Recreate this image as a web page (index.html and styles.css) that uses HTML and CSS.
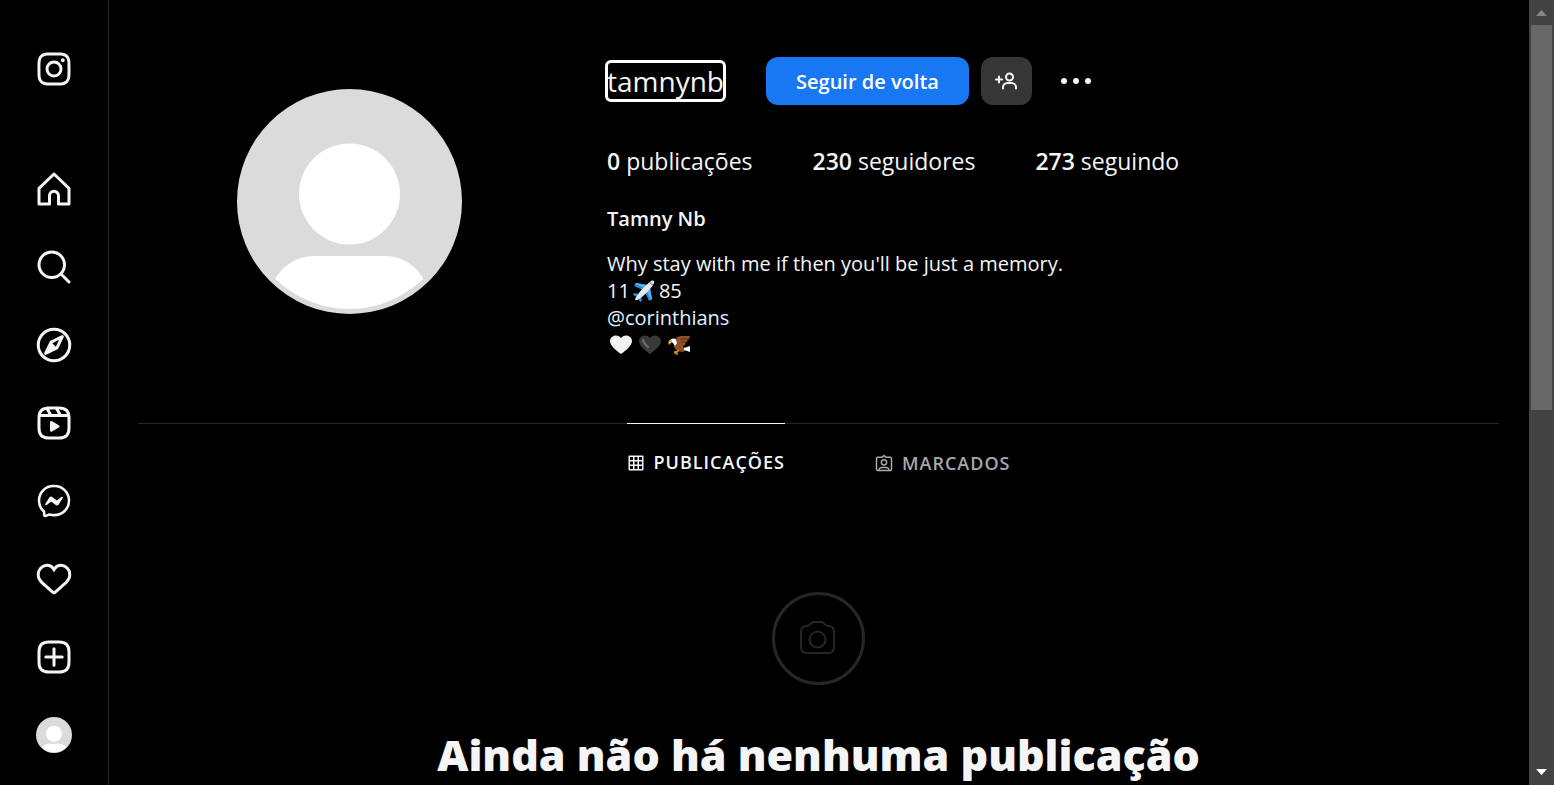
FILE: index.html
```html
<!DOCTYPE html>
<html lang="pt-BR">
<head>
<meta charset="utf-8">
<meta name="viewport" content="width=device-width, initial-scale=1">
<title>Tamny Nb (@tamnynb)</title>
<link rel="stylesheet" href="styles.css">
</head>
<body>
<svg class="defs" aria-hidden="true">
  <symbol id="avatar" viewBox="0 0 225 225">
    <circle cx="112.500" cy="112.500" r="112.500" fill="#dbdbdb"/>
    <circle cx="112.500" cy="105" r="50.500" fill="#fff"/>
    <path d="M38 190C47 175 61 167 78 167h69c17 0 31 8 39.500 23-20 18-45 30-74 30s-54.500-12-74.500-30Z" fill="#fff"/>
  </symbol>
</svg>
<div class="app">
  <nav class="sidebar" aria-label="Principal">
    <a class="nav-link logo" href="#" aria-label="Instagram">
      <svg class="icon" viewBox="0 0 24 24"><path fill="currentColor" d="M12 2.982c2.937 0 3.285.011 4.445.064a6.087 6.087 0 0 1 2.042.379 3.408 3.408 0 0 1 1.265.823 3.408 3.408 0 0 1 .823 1.265 6.087 6.087 0 0 1 .379 2.042c.053 1.160.064 1.508.064 4.445s-.011 3.285-.064 4.445a6.087 6.087 0 0 1-.379 2.042 3.643 3.643 0 0 1-2.088 2.088 6.087 6.087 0 0 1-2.042.379c-1.160.053-1.508.064-4.445.064s-3.285-.011-4.445-.064a6.087 6.087 0 0 1-2.043-.379 3.408 3.408 0 0 1-1.264-.823 3.408 3.408 0 0 1-.823-1.265 6.087 6.087 0 0 1-.379-2.042c-.053-1.160-.064-1.508-.064-4.445s.011-3.285.064-4.445a6.087 6.087 0 0 1 .379-2.042 3.408 3.408 0 0 1 .823-1.265 3.408 3.408 0 0 1 1.265-.823 6.087 6.087 0 0 1 2.042-.379c1.160-.053 1.508-.064 4.445-.064M12 1c-2.987 0-3.362.013-4.535.066a8.074 8.074 0 0 0-2.670.511 5.392 5.392 0 0 0-1.949 1.270 5.392 5.392 0 0 0-1.269 1.948 8.074 8.074 0 0 0-.510 2.670C1.012 8.638 1 9.013 1 12s.013 3.362.066 4.535a8.074 8.074 0 0 0 .511 2.670 5.392 5.392 0 0 0 1.270 1.949 5.392 5.392 0 0 0 1.948 1.269 8.074 8.074 0 0 0 2.670.510C8.638 22.988 9.013 23 12 23s3.362-.013 4.535-.066a8.074 8.074 0 0 0 2.670-.511 5.625 5.625 0 0 0 3.218-3.218 8.074 8.074 0 0 0 .510-2.670C22.988 15.362 23 14.987 23 12s-.013-3.362-.066-4.535a8.074 8.074 0 0 0-.511-2.670 5.392 5.392 0 0 0-1.270-1.949 5.392 5.392 0 0 0-1.948-1.269 8.074 8.074 0 0 0-2.670-.510C15.362 1.012 14.987 1 12 1Zm0 5.351A5.649 5.649 0 1 0 17.649 12 5.649 5.649 0 0 0 12 6.351Zm0 9.316A3.667 3.667 0 1 1 15.667 12 3.667 3.667 0 0 1 12 15.667Zm5.872-10.859a1.320 1.320 0 1 0 1.320 1.320 1.320 1.320 0 0 0-1.320-1.320Z"/></svg>
    </a>
    <a class="nav-link" href="#" aria-label="Página inicial">
      <svg class="icon line" viewBox="0 0 24 24"><path d="M9.005 16.545a2.997 2.997 0 0 1 2.997-2.997A2.997 2.997 0 0 1 15 16.545V22h7V11.543L12 2 2 11.543V22h7.005Z"/></svg>
    </a>
    <a class="nav-link" href="#" aria-label="Pesquisa">
      <svg class="icon line" viewBox="0 0 24 24"><path d="M19 10.500A8.500 8.500 0 1 1 10.500 2a8.500 8.500 0 0 1 8.500 8.500ZM16.511 16.511 22 22"/></svg>
    </a>
    <a class="nav-link" href="#" aria-label="Explorar">
      <svg class="icon line" viewBox="0 0 24 24"><path d="m13.941 13.953 3.640-7.530-7.530 3.640-3.640 7.530Z"/><path fill="currentColor" stroke="none" d="M10.060 10.056 13.949 13.945 6.423 17.580Z"/><circle cx="12" cy="12" r="10.500"/></svg>
    </a>
    <a class="nav-link" href="#" aria-label="Reels">
      <svg class="icon line" viewBox="0 0 24 24"><path d="M2.050 7.002H21.950M13.504 2.001l2.858 5.001M7.207 2.110l2.795 4.892M2 12.001v3.449c0 2.849.698 4.006 1.606 4.945.940.908 2.098 1.607 4.946 1.607h6.896c2.848 0 4.006-.699 4.946-1.607.908-.939 1.606-2.096 1.606-4.945V8.552c0-2.848-.698-4.006-1.606-4.945C19.454 2.699 18.296 2 15.448 2H8.552c-2.848 0-4.006.699-4.946 1.607C2.698 4.546 2 5.704 2 8.552Z"/><path fill="currentColor" stroke="none" d="M9.763 17.664a.908.908 0 0 1-.454-.787V11.630a.909.909 0 0 1 1.364-.788l4.545 2.624a.909.909 0 0 1 0 1.575l-4.545 2.624a.910.910 0 0 1-.910-.001Z"/></svg>
    </a>
    <a class="nav-link" href="#" aria-label="Mensagens">
      <svg class="icon" viewBox="0 0 24 24"><path fill="none" stroke="currentColor" stroke-width="1.739" d="M12.003 2.001a9.705 9.705 0 1 1 0 19.400 10.876 10.876 0 0 1-2.895-.384.798.798 0 0 0-.533.040l-1.984.876a.801.801 0 0 1-1.123-.708l-.054-1.780a.806.806 0 0 0-.270-.569 9.490 9.490 0 0 1-3.140-7.175 9.650 9.650 0 0 1 10-9.700Z"/><path fill="currentColor" d="M17.790 10.132a.659.659 0 0 0-.962-.873l-2.556 2.050a.630.630 0 0 1-.758.002L11.060 9.470a1.576 1.576 0 0 0-2.277.420l-2.567 3.980a.659.659 0 0 0 .961.875l2.556-2.049a.630.630 0 0 1 .759-.002l2.452 1.840a1.576 1.576 0 0 0 2.278-.420Z"/></svg>
    </a>
    <a class="nav-link" href="#" aria-label="Notificações">
      <svg class="icon" viewBox="0 0 24 24"><path fill="currentColor" d="M16.792 3.904A4.989 4.989 0 0 1 21.500 9.122c0 3.072-2.652 4.959-5.197 7.222-2.512 2.243-3.865 3.469-4.303 3.752-.477-.309-2.143-1.823-4.303-3.752C5.141 14.072 2.500 12.167 2.500 9.122a4.989 4.989 0 0 1 4.708-5.218 4.210 4.210 0 0 1 3.675 1.941c.840 1.175.980 1.763 1.120 1.763s.278-.588 1.110-1.766a4.170 4.170 0 0 1 3.679-1.938m0-2a6.040 6.040 0 0 0-4.797 2.127 6.052 6.052 0 0 0-4.787-2.127A6.985 6.985 0 0 0 .500 9.122c0 3.610 2.550 5.827 5.015 7.970.283.246.569.494.853.747l1.027.918a44.998 44.998 0 0 0 3.518 3.018 2 2 0 0 0 2.174 0 45.263 45.263 0 0 0 3.626-3.115l.922-.824c.293-.260.590-.519.885-.774 2.334-2.025 4.980-4.320 4.980-7.940a6.985 6.985 0 0 0-6.708-7.218Z"/></svg>
    </a>
    <a class="nav-link" href="#" aria-label="Criar">
      <svg class="icon line" viewBox="0 0 24 24"><path d="M2 12v3.450c0 2.848.699 4.005 1.606 4.944.940.909 2.098 1.608 4.946 1.608h6.896c2.848 0 4.006-.700 4.946-1.608C21.302 19.455 22 18.300 22 15.450V8.552c0-2.849-.698-4.006-1.606-4.945C19.454 2.700 18.296 2 15.448 2H8.552c-2.848 0-4.006.699-4.946 1.607C2.699 4.547 2 5.703 2 8.552ZM6.545 12.001H17.455M12.003 6.545V17.455"/></svg>
    </a>
    <a class="nav-link" href="#" aria-label="Perfil">
      <svg class="icon"><use href="#avatar"/></svg>
    </a>
  </nav>

  <main class="main">
    <header class="profile">
      <div class="photo">
        <svg class="photo-img" role="img" aria-label="Foto do perfil de tamnynb"><use href="#avatar"/></svg>
      </div>
      <section class="info">
        <div class="title-row">
          <a class="username" href="#">tamnynb</a>
          <button class="btn follow" type="button">Seguir de volta</button>
          <button class="btn suggest" type="button" aria-label="Pessoas semelhantes">
            <svg class="icon-add" viewBox="0 0 24 24"><path d="M19 8a3.500 3.500 0 1 1-7 0 3.500 3.500 0 0 1 7 0ZM22 19.500v-1a4.500 4.500 0 0 0-4.500-4.500h-4A4.500 4.500 0 0 0 9 18.500v1M5 7.500v6M2 10.500h6" fill="none" stroke="currentColor" stroke-width="2" stroke-linecap="round"/></svg>
          </button>
          <button class="more" type="button" aria-label="Opções">
            <svg class="icon-more" viewBox="0 0 32 32"><g fill="currentColor"><circle cx="4" cy="16" r="3"/><circle cx="16" cy="16" r="3"/><circle cx="28" cy="16" r="3"/></g></svg>
          </button>
        </div>
        <ul class="stats">
          <li><b>0</b> publicações</li>
          <li><a href="#"><b>230</b> seguidores</a></li>
          <li><a href="#"><b>273</b> seguindo</a></li>
        </ul>
        <h2 class="name">Tamny Nb</h2>
        <p class="bio">Why stay with me if then you'll be just a memory.<br>
        11<svg class="emoji" viewBox="0 0 22 22" role="img" aria-label="avião"><path fill="#2a8bdb" d="M10 10 1 6l2-3 11 2ZM12 12l4 9 3-2-2-11ZM6 14l-5-1-1 2 4 2ZM8 16l1 5-2 1-2-4Z"/><path fill="#55b4f5" d="m2 4 10 4 2-3L3 3ZM18 20l-4-9 3-3 2 11Z"/><path fill="#e5e7ef" d="M2 20c0-3 8-13 15-18 2-2 5-2 4 1-1 4-13 16-17 17Z"/><path d="m17 3 3 2" stroke="#536074" stroke-width="1"/></svg>85<br>
        <a class="mention" href="#">@corinthians</a><br>
        <svg class="emoji" viewBox="0 0 22 22" role="img" aria-label="coração branco"><path fill="#f2f2f2" d="M11 20C5 16 0 11 0 7c0-5 7-8 11-3 4-5 11-2 11 3 0 4-5 9-11 13Z"/><ellipse cx="4.500" cy="6.500" rx="2" ry="1" fill="#fff" transform="rotate(-45 4.500 6.500)"/></svg><svg class="emoji" viewBox="0 0 22 22" role="img" aria-label="coração preto"><path fill="#393939" d="M11 20C5 16 0 11 0 7c0-5 7-8 11-3 4-5 11-2 11 3 0 4-5 9-11 13Z"/><path d="M4 6c1 4 3 5 5 7" fill="none" stroke="#686868" stroke-width="2.500" stroke-linecap="round"/></svg><svg class="emoji" viewBox="0 0 22 22" role="img" aria-label="águia"><path fill="#8c502b" d="M6 8c1-4 4-6 8-6h8l-1 3-2 1 1 1-3 2 1 1-3 2 3 4-3 2-6-1-3-4Z"/><path d="M12 5h8M13 8h5" stroke="#5f3219" stroke-width="1"/><path fill="#fff" d="M2 7c1-3 5-3 6-1l1 3-2 3-2-3ZM16 14l6-2v6l-6-2Z"/><path fill="#f5b52c" d="M4 6C0 6 0 8 1 11l3-3Z"/><path d="m11 16-2 2H6m3 0v3M8 17l-1 3" fill="none" stroke="#c9902a" stroke-width="1.500"/></svg></p>
      </section>
    </header>

    <nav class="tabs" aria-label="Conteúdo do perfil">
      <a class="tab active" href="#">
        <svg class="tab-icon" viewBox="0 0 24 24"><path d="M3 3h18v18H3ZM9 3v18M15 3v18M21 9H3M21 15H3" fill="none" stroke="currentColor" stroke-width="2" stroke-linejoin="round"/></svg>
        <span>PUBLICAÇÕES</span>
      </a>
      <a class="tab" href="#">
        <svg class="tab-icon" viewBox="0 0 24 24"><path d="M10.201 3.797 12 1.997l1.799 1.800a1.590 1.590 0 0 0 1.124.465h5.259A1.818 1.818 0 0 1 22 6.080v14.104a1.818 1.818 0 0 1-1.818 1.818H3.818A1.818 1.818 0 0 1 2 20.184V6.080a1.818 1.818 0 0 1 1.818-1.818h5.260a1.590 1.590 0 0 0 1.123-.465ZM18.598 22v-.488a3.415 3.415 0 0 0-3.415-3.416H8.810a3.415 3.415 0 0 0-3.415 3.416V22" fill="none" stroke="currentColor" stroke-width="2" stroke-linecap="round" stroke-linejoin="round"/><circle cx="12" cy="11.072" r="3.556" fill="none" stroke="currentColor" stroke-width="2"/></svg>
        <span>MARCADOS</span>
      </a>
    </nav>

    <section class="empty">
      <svg class="camera" viewBox="0 0 93 93" aria-hidden="true"><g fill="none" stroke="currentColor"><circle cx="46.500" cy="46.500" r="45" stroke-width="3"/><g stroke-width="2"><path d="M35 34c4 0 3-4 7-4h7c4 0 3 4 7 4 4 0 6 2 6 6v15c0 4-2 6-6 6H35c-4 0-6-2-6-6V40c0-4 2-6 6-6Z" stroke-linejoin="round"/><circle cx="45.500" cy="47.500" r="8"/></g></g></svg>
      <h1 class="empty-title">Ainda não há nenhuma publicação</h1>
    </section>
  </main>

  <div class="scrollbar" aria-hidden="true">
    <svg class="arrow up" viewBox="0 0 11 6"><path d="M0 6 5.500 0 11 6Z" fill="currentColor"/></svg>
    <div class="thumb"></div>
    <svg class="arrow" viewBox="0 0 11 6"><path d="M0 0h11L5.500 6Z" fill="currentColor"/></svg>
  </div>
</div>
</body>
</html>
```
FILE: styles.css
```css
* { box-sizing: border-box; }

body {
  margin: 0;
  background: #000;
  color: #f5f5f5;
  font-family: "Open Sans", "Noto Sans", sans-serif;
  font-size: 20px;
  line-height: 27px;
}

a { color: inherit; text-decoration: none; }
button { padding: 0; border: 0; color: inherit; font: inherit; cursor: pointer; }
svg { flex: none; }
.defs { display: none; }

.app { display: flex; height: 100vh; overflow: hidden; }

/* Sidebar */
.sidebar {
  display: flex;
  flex: none;
  flex-direction: column;
  align-items: center;
  gap: 42px;
  width: 109px;
  padding-top: 51px;
  border-right: 1px solid #262626;
}
.nav-link { display: flex; }
.logo { margin-bottom: 42px; }
.icon { width: 36px; height: 36px; }
.line {
  fill: none;
  stroke: currentColor;
  stroke-width: 2;
  stroke-linejoin: round;
  stroke-linecap: round;
}

/* Profile header */
.main { flex: 1; min-width: 0; padding: 57px 30px 0 29px; }
.profile { display: flex; gap: 46px; height: 366px; }
.photo { display: flex; justify-content: center; flex: 0 0 423px; padding-top: 32px; }
.photo-img { width: 225px; height: 225px; }
.info { flex: 1; min-width: 0; }

.title-row { display: flex; align-items: center; height: 48px; }
.username {
  margin-right: 42px;
  border-radius: 4px;
  outline: 3px solid #fff;
  outline-offset: -1px;
  font-size: 28px;
  line-height: 38px;
}
.btn { height: 48px; border-radius: 12px; font-weight: 600; }
.follow { width: 203px; margin-right: 12px; background: #1877f2; color: #fff; }
.suggest {
  display: flex;
  align-items: center;
  justify-content: center;
  width: 51px;
  background: #363636;
}
.icon-add { width: 24px; height: 24px; }
.more { display: flex; margin-left: 28px; background: none; }
.icon-more { width: 32px; height: 32px; }

.stats {
  display: flex;
  gap: 60px;
  margin: 43px 0 0;
  padding: 0;
  list-style: none;
  font-size: 23px;
}
.stats b { font-weight: 600; }
.name { margin: 30px 0 18px; font-size: 20px; font-weight: 600; line-height: 27px; }
.bio { margin: 0; }
.mention { color: #e0f1ff; }
.emoji { width: 22px; height: 22px; margin: 0 4px 0 3px; vertical-align: -4px; }

/* Tabs */
.tabs {
  display: flex;
  justify-content: center;
  gap: 90px;
  border-top: 1px solid #262626;
  font-size: 18px;
  font-weight: 600;
  letter-spacing: 1px;
  color: #a8a8a8;
}
.tab { display: flex; align-items: center; gap: 9px; height: 78px; }
.active { margin-top: -1px; border-top: 1px solid #f5f5f5; color: #f5f5f5; }
.tab-icon { width: 18px; height: 18px; }

/* Empty state */
.empty { display: flex; flex-direction: column; align-items: center; padding-top: 90px; }
.camera { width: 93px; height: 93px; color: #262626; }
.empty-title {
  margin: 42px 0 0;
  font-size: 43px;
  font-weight: 800;
  line-height: 56px;
  white-space: nowrap;
}

/* Scrollbar */
.scrollbar {
  display: flex;
  flex: none;
  flex-direction: column;
  align-items: center;
  width: 25px;
  padding: 10px 0;
  background: #424242;
}
.arrow { width: 11px; height: 6px; color: #fff; }
.up { color: #868686; }
.thumb { width: 21px; height: 385px; margin: 9px 0 auto; background: #686868; }
```
